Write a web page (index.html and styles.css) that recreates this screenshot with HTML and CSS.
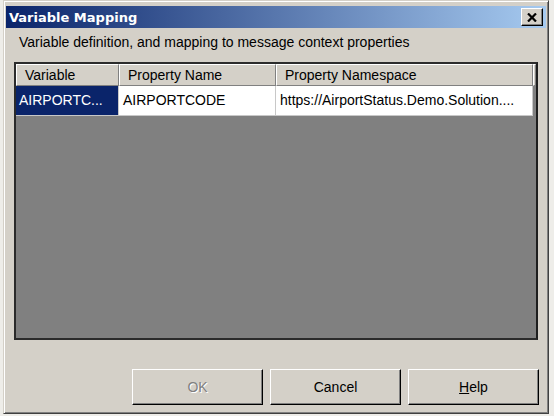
FILE: index.html
```html
<!DOCTYPE html>
<html lang="en">
<head>
    <meta charset="UTF-8">
    <title>Variable Mapping</title>
    <link rel="stylesheet" href="styles.css">
</head>
<body>
    <div class="dialog">
        <div class="title-bar">
            <span class="title-text">Variable Mapping</span>
            <button class="close-btn" aria-label="Close">
                <svg width="10" height="9" viewBox="0 0 10 9">
                    <path d="M1 0.5 L9 8.5 M9 0.5 L1 8.5" stroke="#000" stroke-width="2.2" fill="none"/>
                </svg>
            </button>
        </div>
        <div class="dialog-body">
            <p class="description">Variable definition, and mapping to message context properties</p>

            <div class="grid">
                <div class="grid-header">
                    <div class="col-head col-var">Variable</div>
                    <div class="col-head col-name">Property Name</div>
                    <div class="col-head col-ns">Property Namespace</div>
                    <div class="col-head col-fill"></div>
                </div>
                <div class="grid-row">
                    <div class="cell col-var selected">AIRPORTC...</div>
                    <div class="cell col-name">AIRPORTCODE</div>
                    <div class="cell col-ns">https://AirportStatus.Demo.Solution....</div>
                </div>
            </div>

            <div class="button-row">
                <button class="dlg-btn" disabled>OK</button>
                <button class="dlg-btn">Cancel</button>
                <button class="dlg-btn"><u>H</u>elp</button>
            </div>
        </div>
    </div>
</body>
</html>
```

FILE: styles.css
```css
:root {
    --face: #d4d0c8;
    --shadow: #808080;
    --dark: #404040;
    --highlight: #ffffff;
    --navy: #0a246a;
    --title-end: #a6caf0;
}

* {
    margin: 0;
    padding: 0;
    box-sizing: border-box;
    font-family: "Liberation Sans", Arial, sans-serif;
}

body {
    background-color: #eeede9;
    padding: 0 5px 0 3px;
}

.dialog {
    width: 546px;
    height: 414px;
    background-color: var(--face);
    border: 1px solid;
    border-color: var(--face) var(--dark) var(--dark) var(--face);
    box-shadow: inset 1px 1px var(--highlight), inset -1px -1px var(--shadow);
    padding: 5px 2px 2px 2px;
    display: flex;
    flex-direction: column;
}

.title-bar {
    height: 22px;
    background: linear-gradient(to right, var(--navy), var(--title-end));
    display: flex;
    align-items: center;
    justify-content: space-between;
    padding: 0 3px 0 3px;
}

.title-text {
    color: white;
    font-family: "DejaVu Sans", Verdana, sans-serif;
    font-weight: 700;
    font-size: 13px;
}

.close-btn {
    width: 22px;
    height: 18px;
    background-color: var(--face);
    border: 1px solid;
    border-color: var(--highlight) #000 #000 var(--highlight);
    box-shadow: inset -1px -1px var(--shadow);
    display: flex;
    align-items: center;
    justify-content: center;
}

.dialog-body {
    flex: 1;
    display: flex;
    flex-direction: column;
    padding: 0 8px;
}

.description {
    font-size: 14px;
    line-height: 16px;
    color: #000;
    margin-top: 6px;
    padding-left: 5px;
}

.grid {
    margin-top: 12px;
    height: 278px;
    background-color: var(--shadow);
    border: 2px solid #2b2b2b;
    border-right-color: #1e1e1e;
}

.grid-header {
    display: flex;
    height: 22px;
}

.col-head {
    background-color: var(--face);
    border-top: 1px solid var(--highlight);
    border-left: 1px solid var(--highlight);
    border-right: 1px solid var(--shadow);
    border-bottom: 1px solid var(--shadow);
    font-size: 14px;
    line-height: 20px;
    padding-left: 8px;
    color: #000;
}

.col-var { width: 103px; }
.col-name { width: 157px; }
.col-ns { width: 257px; }
.col-fill { flex: 1; padding: 0; }

.grid-row {
    display: flex;
    height: 30px;
}

.cell {
    background-color: white;
    font-size: 14px;
    line-height: 29px;
    padding-left: 4px;
    border-right: 1px solid #c8c8c8;
    border-bottom: 1px solid #c8c8c8;
    white-space: nowrap;
    overflow: hidden;
    color: #000;
}

.cell.col-var { padding-left: 3px; }

.cell.selected {
    background-color: var(--navy);
    color: white;
}

.button-row {
    margin-top: 29px;
    display: flex;
    justify-content: flex-end;
    gap: 7px;
    margin-right: -1px;
}

.dlg-btn {
    width: 131px;
    height: 36px;
    background-color: var(--face);
    border: 1px solid;
    border-color: var(--highlight) #000 #000 var(--highlight);
    box-shadow: inset -1px -1px var(--shadow);
    font-size: 14px;
    color: #000;
}

.dlg-btn:disabled {
    color: var(--shadow);
    text-shadow: 1px 1px var(--highlight);
}
```
